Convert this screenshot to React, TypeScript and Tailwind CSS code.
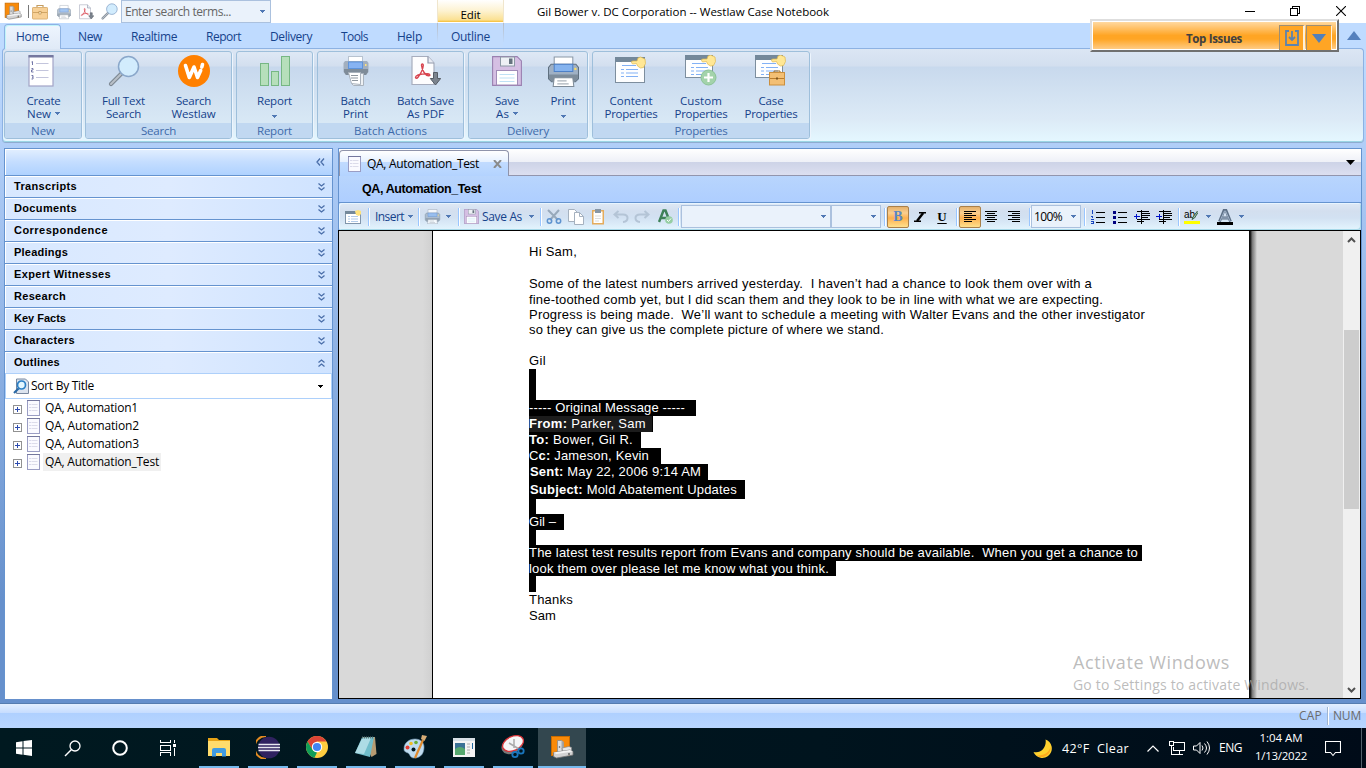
import { useLayoutEffect, useRef, type ReactNode } from "react";

/* Spreads a run of text over a given width with letter spacing. */
function Fit({ w, className = "", children }: { w: number; className?: string; children: ReactNode }) {
  const ref = useRef<HTMLSpanElement>(null);
  useLayoutEffect(() => {
    const el = ref.current;
    if (!el) return;
    el.style.letterSpacing = "0px";
    const n = (el.textContent || "x").length;
    const natural = el.getBoundingClientRect().width;
    el.style.letterSpacing = `${(w - natural) / n}px`;
  }, [w]);
  return (
    <span ref={ref} className={`inline-block shrink-0 whitespace-pre ${className}`}>
      {children}
    </span>
  );
}

function Arrow({ className = "text-[#5078b4]" }: { className?: string }) {
  return (
    <svg width="5" height="3" viewBox="0 0 5 3" className={`shrink-0 ${className}`} shapeRendering="crispEdges">
      <path d="M0 0h5v1H4v1H3v1H2V2H1V1H0z" fill="currentColor" />
    </svg>
  );
}

/* ---------- icons ---------- */
const AppIcon = ({ s = 16 }: { s?: number }) => (
  <svg width={s} height={s} viewBox="0 0 24 24">
    <rect x="1.500" y="1.500" width="18" height="19" fill="#f98a08" stroke="#c96c00" />
    <path d="M7.500 5.500h4l2 1.500v12h-6z" fill="#dcdcdc" stroke="#8a8a8a" strokeWidth=".8" />
    <path d="M11.500 5.500l2 1.500v10h-2z" fill="#a5a5a5" />
    <circle cx="9.500" cy="12" r=".8" fill="#555" />
    <path d="M12 13l7-1.500 2.500 1v3L13 17z" fill="#e6e6e6" stroke="#888" strokeWidth=".7" />
    <path d="M3.500 17.500L20 15l3 1.500v3.500L6.500 23l-3-1.500z" fill="#d3d3d3" stroke="#777" strokeWidth=".8" />
    <path d="M3.500 17.500L20 15l3 1.500L6.500 19z" fill="#f4f4f4" />
    <circle cx="19" cy="19" r=".9" fill="#555" />
  </svg>
);
const Briefcase = ({ w = 17 }: { w?: number }) => (
  <svg width={w} height={w} viewBox="0 0 16 16">
    <path d="M5 4V1.5h6V4" fill="none" stroke="#c39c60" strokeWidth="1.2" />
    <rect x=".5" y="3.5" width="15" height="11.5" rx=".6" fill="#f7d096" stroke="#dcb377" />
    <path d="M1 8.5h14" stroke="#d0a565" />
    <rect x="7" y="7.5" width="2" height="2.5" fill="#fff1d0" stroke="#a87735" strokeWidth=".5" />
  </svg>
);
const Printer = ({ w, h, soft = false }: { w: number; h: number; soft?: boolean }) => (
  <svg width={w} height={h} viewBox="0 0 30 30" opacity={soft ? 0.75 : 1}>
    <path d="M6 1h18v10H6z" fill="#fff" stroke="#8a97a5" strokeWidth="1" />
    <path d="M3 8h24l2.5 3v11l-3 3h-23l-3-3V11z" fill="#9fb0c4" stroke="#5f7080" strokeWidth="1" />
    <path d="M1 18h28v4l-3 3H4l-3-3z" fill="#7d8c9b" />
    <path d="M6 8h18v7H6z" fill="#85b3ee" stroke="#4d80c8" strokeWidth="1" />
    <path d="M6 21h18l1 8.5H5z" fill="#fff" stroke="#7e8b98" strokeWidth="1" />
    <path d="M9 24h9M9 27h11" stroke="#aab2ba" strokeWidth="1.2" />
    <rect x="25.5" y="11.5" width="2" height="2" fill="#ffdf5d" />
  </svg>
);
const BatchPrinter = () => (
  <svg width="26" height="32" viewBox="0 0 26 32">
    <rect x="5.5" y="1.5" width="14" height="8" fill="#fff" stroke="#b7c2cf" />
    <path d="M2 6h22l1.5 2v9L23 20H3L.5 17V8z" fill="#a2afbf" />
    <path d="M1 14h24v3l-2 3H3l-2-3z" fill="#7f8c99" />
    <rect x="5.5" y="7" width="14" height="6.5" fill="#87b3f2" stroke="#5e94dc" />
    <path d="M8.500 18.500h12v12h-10l-2-2z" fill="#eef1f4" stroke="#aab3bd" />
    <path d="M5.500 17.500h12v12l-9-1z" fill="#fff" stroke="#aab3bd" />
    <path d="M8 20.500h7M8 23h7M9 25.500h6" stroke="#8f979f" />
    <rect x="22" y="9" width="1.500" height="2" fill="#ffe27a" />
  </svg>
);
const PdfIcon = ({ w, h }: { w: number; h: number }) => (
  <svg width={w} height={h} viewBox="0 0 30 32">
    <path d="M1 1.500h16l6 6.500v21.500H1z" fill="#fdfdfe" stroke="#a7adbd" strokeWidth="1.200" />
    <path d="M17 1.500V8h6" fill="#e9ecf4" stroke="#8f97aa" strokeWidth="1.200" />
    <path d="M4.500 22.500c0-2.500 7-3.500 11.500-3.700 3-.1 4 2.200 1.500 2-3-.3-6.500-5-7-10.500-.1-1.800 1.900-1.700 1.800 0-.3 4-3 9-5.300 12-1 1.300-2.500 1.200-2.500.2z" fill="none" stroke="#d8444f" strokeWidth="1.400" />
    <path d="M22.500 17.500h4v6h3.200L24.500 30l-5.200-6.500h3.200z" fill="#7c848e" stroke="#565d66" />
  </svg>
);
const Magnifier = ({ w }: { w: number }) => (
  <svg width={w} height={w} viewBox="0 0 32 32">
    <path d="M3 29L13 19" stroke="#7d8792" strokeWidth="4.200" strokeLinecap="round" />
    <path d="M3 29L13 19" stroke="#b9c0c8" strokeWidth="2" strokeLinecap="round" />
    <circle cx="20.500" cy="11.500" r="10" fill="#d2ecfd" stroke="#8aa7ca" strokeWidth="1.500" />
  </svg>
);
const CreateIcon = () => (
  <svg width="26" height="32" viewBox="0 0 26 32" className="-ml-[6px]">
    <rect x="1" y="1" width="24" height="30" fill="#fff" stroke="#a2a4c6" strokeWidth="1.200" />
    <path d="M.500 0h25v2.500H.500z" fill="#75789f" />
    <path d="M8 8.500h12.500M8 15.500h12.500M8 22.500h12.500" stroke="#c3c5dc" />
    <path d="M3.500 7l1-.5V10M3.500 13.500h1.500v1.500h-1.500v2h2M3.500 20.500h1.500v3.500h-1.500M4 22.200h1" fill="none" stroke="#7478a8" />
  </svg>
);
const WestlawIcon = () => (
  <svg width="32" height="32" viewBox="0 0 32 32">
    <circle cx="16" cy="16" r="16" fill="#ff8000" />
    <path d="M7.500 10.500L11.300 22.500L16 12L19.500 22.500L22.700 15.500M24.500 9.500L23.800 12" fill="none" stroke="#fff" strokeWidth="3.600" strokeLinecap="round" strokeLinejoin="round" />
  </svg>
);
const ChartIcon = () => (
  <svg width="30" height="30" viewBox="0 0 30 30">
    <g fill="#b6dfbb" stroke="#76b784">
      <rect x=".500" y="7.500" width="8" height="22" />
      <rect x="11.500" y="15.500" width="7" height="14" />
      <rect x="21.500" y=".500" width="8" height="29" />
    </g>
  </svg>
);
const Floppy = ({ w }: { w: number }) => (
  <svg width={w} height={w} viewBox="0 0 30 30">
    <path d="M.600.600h24.500l4.300 4.300v24.500H.600z" fill="#d5bfe3" stroke="#9a80b0" strokeWidth="1.100" />
    <rect x="8.500" y="1" width="14" height="9" fill="#eef1f5" stroke="#8d99a6" />
    <rect x="17" y="2.500" width="3.500" height="5.500" fill="#66737f" />
    <rect x="4.500" y="14.500" width="21" height="14.500" fill="#fff" stroke="#a18cb8" />
    <path d="M7.500 18.500h15M7.500 22h15M7.500 25.500h15" stroke="#bfe1f5" />
  </svg>
);
const WindowIcon = ({ kind }: { kind: "content" | "custom" | "case" }) => {
  const y = kind === "content" ? 2 : 0;
  const wide = kind === "content" ? 29 : 27;
  const tall = kind === "content" ? 25 : 22;
  return (
    <svg width="32" height="32" viewBox="0 0 32 32">
      <rect x=".500" y={y + 0.5} width={wide} height={tall} fill="#fdfeff" stroke="#7d8e9e" />
      <rect x="0" y={y} width={wide + 1} height="5" fill="#74889a" />
      <path d={`M7 ${y + 8.5}h14M6 ${y + 12.5}h3M11 ${y + 12.5}h12M6 ${y + 16}h3M11 ${y + 16}h12M6 ${y + 19.500}h3M11 ${y + 19.500}h12`} stroke="#82b1f5" />
      <path d={`M16.500 ${y + 5.500}q-.500-1.500 1.500-1.500h4l1-3 2.500-1 4.500 2 .500 4.500-2 4-3 .500-3-2-1-2.500-4 .500z`} fill="#ffe795" stroke="#e0b94e" strokeWidth=".700" />
      {kind === "custom" && (
        <>
          <circle cx="23.500" cy="22.500" r="7.500" fill="#a3d3ab" stroke="#8cc397" />
          <path d="M23.500 18v9M19 22.500h9" stroke="#fff" strokeWidth="2.200" />
        </>
      )}
      {kind === "case" && (
        <>
          <path d="M19 18v-2h6v2" fill="none" stroke="#9b6a25" />
          <rect x="14.500" y="17.500" width="15" height="12.500" fill="#f3bf74" stroke="#cb8f3d" />
          <path d="M15 23.500h14" stroke="#b97c2d" />
          <rect x="21" y="22.500" width="2" height="2" fill="#7d551f" />
        </>
      )}
    </svg>
  );
};
const DocIcon = () => (
  <svg width="13" height="16" viewBox="0 0 13 16">
    <rect x=".500" y=".500" width="12" height="15" fill="#fafaff" stroke="#9a9dc4" />
    <path d="M0 .500h13" stroke="#74779d" />
    <path d="M4.500 4.500h6M4.500 7.500h6M4.500 10.500h6" stroke="#dcdcea" />
    <path d="M2.500 4.500h1M2.500 7.500h1M2.500 10.500h1" stroke="#b6b8d6" />
  </svg>
);
const Chev = ({ up = false }: { up?: boolean }) => (
  <svg width="7" height="8" viewBox="0 0 7 8" className={up ? "rotate-180" : ""}>
    <path d="M.500.500l3 2.500 3-2.500M.500 4.500l3 2.500 3-2.500" fill="none" stroke="#4a6ea9" strokeWidth="1.300" />
  </svg>
);
const Lines = ({ d, extra }: { d: string; extra?: ReactNode }) => (
  <svg width="16" height="14" viewBox="0 0 16 14" shapeRendering="crispEdges">
    <path d={d} stroke="#000" fill="none" />
    {extra}
  </svg>
);

/* ---------- ribbon ---------- */
function RibbonButton({ slot, icon, children }: { slot: string; icon: ReactNode; children: ReactNode }) {
  return (
    <div className={`flex flex-col items-center ${slot}`}>
      <div className="flex h-9 w-8 shrink-0 items-center justify-center">{icon}</div>
      <div className="mt-[5px] flex shrink-0 flex-col items-center text-[11.5px] leading-[13px] text-[#15428b]">{children}</div>
    </div>
  );
}
function Group({ size, name, w, children }: { size: string; name: string; w: number; children: ReactNode }) {
  return (
    <div className={`flex h-[88px] flex-col overflow-hidden rounded-[3px] border border-[#9ebfdb] bg-[linear-gradient(#dee8f5_0px,#d3dfef_14px,#c7d8ed_15px,#d8e8f5_70px)] shadow-[1px_1px_0_#edf5fd] ${size}`}>
      <div className="flex h-[71px] justify-center pt-[1px]">{children}</div>
      <div className="flex h-[15px] items-center justify-center bg-[#c1d8f1] text-[11.5px] leading-[15px] text-[#3e6aaa]">
        <Fit w={w}>{name}</Fit>
      </div>
    </div>
  );
}
const Line2 = ({ children }: { children: ReactNode }) => <div className="flex h-[13px] items-center gap-1">{children}</div>;

const tabs = [
  { t: "New", w: 24, c: "w-[58px]" },
  { t: "Realtime", w: 46, c: "w-[70px]" },
  { t: "Report", w: 35, c: "w-[69px]" },
  { t: "Delivery", w: 42, c: "w-[66px]" },
  { t: "Tools", w: 27, c: "w-[61px]" },
  { t: "Help", w: 25, c: "w-[49px]" },
];

function TitleBar() {
  return (
    <header className="flex h-[23px] shrink-0 items-center bg-white">
      <div className="flex w-[28px] justify-center pr-[3px] pb-[2px]"><AppIcon s={18} /></div>
      <div className="h-[13px] w-px bg-[#777]" />
      <div className="ml-[3px] flex w-[17px]"><Briefcase w={16} /></div>
      <div className="ml-[8px] flex w-[15px]"><Printer w={14} h={16} soft /></div>
      <div className="ml-[7px] flex w-[15px]"><PdfIcon w={15} h={16} /></div>
      <div className="ml-[7px] flex w-[17px]"><Magnifier w={17} /></div>
      <div className="ml-[3px] flex h-[23px] w-[150px] items-center justify-between border border-[#abc1de] bg-[#eaf2fb] pr-[5px] pl-[3px] text-[12px] text-[#666]">
        <Fit w={106}>Enter search terms...</Fit>
        <Arrow />
      </div>
      <div className="ml-[166px] flex h-[23px] w-[67px] items-end justify-center border-x border-[#f0e6cd] border-b border-b-white bg-[linear-gradient(#ffffff,#fdf2d0_50%,#fbe193_90%,#f5bd36)] text-[11.5px] leading-[14px] text-black">
        <Fit w={20}>Edit</Fit>
      </div>
      <div className="ml-[33px] flex-1 text-[11.5px] text-black"><Fit w={292}>Gil Bower v. DC Corporation -- Westlaw Case Notebook</Fit></div>
      <svg width="10" height="10" className="mr-[35px]" shapeRendering="crispEdges"><path d="M0 4.500h10" stroke="#000" /></svg>
      <svg width="10" height="10" className="mt-[-2px] mr-[36px]" viewBox="0 0 10 10" shapeRendering="crispEdges"><path d="M.500 2.500h7v7h-7zM2.500 2.500v-2h7v7h-2" fill="none" stroke="#000" /></svg>
      <svg width="10" height="10" className="mt-[-2px] mr-[20px]" viewBox="0 0 10 10"><path d="M0 0l10 10M10 0L0 10" stroke="#000" strokeWidth="1.100" /></svg>
    </header>
  );
}

function Ribbon() {
  return (
    <>
      <nav className="flex h-[25px] shrink-0 items-center bg-[#bfdbff] pl-1 text-[12px] text-[#15428b]">
        <div className="z-10 mt-[2px] flex h-[25px] w-[57px] items-center justify-center rounded-t-[4px] border border-b-0 border-[#8db2e3] bg-[linear-gradient(#eef5fe,#e0eaf7)] shadow-[inset_1px_1px_0_#bff4fa]"><Fit w={33}>Home</Fit></div>
        {tabs.map((t) => (
          <div key={t.t} className={`flex justify-center pt-[2px] ${t.c}`}><Fit w={t.w}>{t.t}</Fit></div>
        ))}
        <div className="ml-[3px] flex h-[25px] w-[67px] bg-[linear-gradient(#b6bcc4,#bfdbff_80%)] px-px">
          <div className="flex flex-1 items-center justify-center bg-[#c1dbfd] pt-[2px]"><Fit w={39}>Outline</Fit></div>
        </div>
        <div className="flex flex-1 justify-end pr-[5px]"><svg width="14" height="9"><path d="M0 9L7 0l7 9z" fill="#5580bd" /></svg></div>
      </nav>
      <section className="mx-[2px] flex h-[94px] shrink-0 gap-1 rounded-[4px] border border-[#8db2e3] border-b-[#9ad5e4] bg-[linear-gradient(#dbe6f4_0px,#d3dfef_17px,#c8d9ed_18px,#dceaf6_70px,#e4f7ff)] px-px pt-[2px] shadow-[0_1px_0_#8eabcf]">
        <Group size="w-[78px]" name="New" w={24}>
          <RibbonButton slot="w-[77px] pl-px" icon={<CreateIcon />}>
            <Line2><Fit w={34}>Create</Fit></Line2>
            <Line2><Fit w={24}>New</Fit><Arrow /></Line2>
          </RibbonButton>
        </Group>
        <Group size="w-[147px] -ml-px" name="Search" w={35}>
          <RibbonButton slot="w-[70px]" icon={<Magnifier w={32} />}>
            <Line2><Fit w={43}>Full Text</Fit></Line2><Line2><Fit w={35}>Search</Fit></Line2>
          </RibbonButton>
          <RibbonButton slot="w-[70px]" icon={<WestlawIcon />}>
            <Line2><Fit w={35}>Search</Fit></Line2><Line2><Fit w={44}>Westlaw</Fit></Line2>
          </RibbonButton>
        </Group>
        <Group size="w-[77px]" name="Report" w={35}>
          <RibbonButton slot="w-[75px]" icon={<ChartIcon />}>
            <Line2><Fit w={35}>Report</Fit></Line2><div className="flex h-[18px] items-center"><Arrow /></div>
          </RibbonButton>
        </Group>
        <Group size="w-[147px]" name="Batch Actions" w={73}>
          <RibbonButton slot="w-[70px]" icon={<BatchPrinter />}>
            <Line2><Fit w={30}>Batch</Fit></Line2><Line2><Fit w={25}>Print</Fit></Line2>
          </RibbonButton>
          <RibbonButton slot="w-[70px]" icon={<PdfIcon w={30} h={32} />}>
            <Line2><Fit w={57}>Batch Save</Fit></Line2><Line2><Fit w={37}>As PDF</Fit></Line2>
          </RibbonButton>
        </Group>
        <Group size="w-[120px]" name="Delivery" w={42}>
          <RibbonButton slot="w-[70px]" icon={<Floppy w={30} />}>
            <Line2><Fit w={24}>Save</Fit></Line2><Line2><Fit w={13}>As</Fit><Arrow /></Line2>
          </RibbonButton>
          <RibbonButton slot="w-[42px]" icon={<Printer w={31} h={31} />}>
            <Line2><Fit w={25}>Print</Fit></Line2><div className="flex h-[18px] items-center"><Arrow /></div>
          </RibbonButton>
        </Group>
        <Group size="w-[218px]" name="Properties" w={53}>
          <RibbonButton slot="w-[70px]" icon={<WindowIcon kind="content" />}>
            <Line2><Fit w={43}>Content</Fit></Line2><Line2><Fit w={53}>Properties</Fit></Line2>
          </RibbonButton>
          <RibbonButton slot="w-[70px]" icon={<WindowIcon kind="custom" />}>
            <Line2><Fit w={42}>Custom</Fit></Line2><Line2><Fit w={53}>Properties</Fit></Line2>
          </RibbonButton>
          <RibbonButton slot="w-[70px]" icon={<WindowIcon kind="case" />}>
            <Line2><Fit w={25}>Case</Fit></Line2><Line2><Fit w={53}>Properties</Fit></Line2>
          </RibbonButton>
        </Group>
      </section>
    </>
  );
}

/* ---------- sidebar ---------- */
const sections: [string, number][] = [
  ["Transcripts", 63], ["Documents", 63], ["Correspondence", 94], ["Pleadings", 54], ["Expert Witnesses", 97],
  ["Research", 52], ["Key Facts", 52], ["Characters", 61], ["Outlines", 46],
];
const tree: [string, number][] = [
  ["QA, Automation1", 93], ["QA, Automation2", 94], ["QA, Automation3", 94], ["QA, Automation_Test", 114],
];

function Sidebar() {
  return (
    <aside className="flex w-[329px] shrink-0 flex-col border border-[#6593cf] border-b-0 bg-white">
      <div className="flex h-[27px] items-center justify-end border-b border-[#6593cf] bg-[linear-gradient(#e3efff,#c4ddff_50%,#afd2ff)] pr-[7px] shadow-[inset_1px_1px_0_#fff]">
        <svg width="9" height="8" viewBox="0 0 9 8"><path d="M4 .500L1 4l3 3.500M8 .500L5 4l3 3.500" fill="none" stroke="#4a6ea9" strokeWidth="1.300" /></svg>
      </div>
      {sections.map(([s, w], i) => (
        <div key={s} className={`flex h-[22px] items-center justify-between border-b bg-[linear-gradient(90deg,#d8e8ff,#deebff_50%,#cfe3ff)] pr-[7px] pl-[9px] font-['Liberation_Sans'] text-[11px] font-bold text-black shadow-[inset_1px_1px_0_#fff] ${i === 8 ? "border-[#aed0fa]" : "border-[#6593cf]"}`}>
          <Fit w={w}>{s}</Fit>
          <Chev up={i === 8} />
        </div>
      ))}
      <div className="flex h-[25px] items-center border-x border-b border-[#add0fb] pr-[8px] pl-[7px] text-[12px] text-black">
        <svg width="16" height="16" viewBox="0 0 16 16">
          <path d="M3.500 1h9l3 3v11.500h-12z" fill="#dce4ef" stroke="#7888a0" />
          <circle cx="8.500" cy="7" r="4" fill="#e3f7ff" stroke="#2b7fc5" strokeWidth="1.700" />
          <path d="M5.500 10.500L1 15" stroke="#2868a6" strokeWidth="2.200" />
        </svg>
        <Fit w={63} className="ml-[2px]">Sort By Title</Fit>
        <div className="flex flex-1 justify-end"><Arrow className="text-black" /></div>
      </div>
      {tree.map(([s, w], i) => (
        <div key={s} className="flex h-[18px] items-center pl-[8px] text-[12px] text-black">
          <svg width="9" height="9" viewBox="0 0 9 9" className="mt-[3px]" shapeRendering="crispEdges"><rect x=".500" y=".500" width="8" height="8" fill="#fff" stroke="#919191" /><path d="M2 4.500h5M4.500 2v5" stroke="#2d4bb0" /></svg>
          <div className="ml-[5px] w-[16px]"><DocIcon /></div>
          <div className={`flex h-[18px] items-center pr-[2px] pl-[2px] ${i === 3 ? "bg-[#f0f0f0]" : ""}`}><Fit w={w}>{s}</Fit></div>
        </div>
      ))}
    </aside>
  );
}

/* ---------- toolbar ---------- */
const Slot = ({ c, children }: { c: string; children?: ReactNode }) => <div className={`flex shrink-0 items-center justify-center ${c}`}>{children}</div>;
const Sep = ({ c = "w-[6px]" }: { c?: string }) => (
  <div className={`flex shrink-0 justify-center ${c}`}><div className="h-[18px] w-px bg-[#9ac6ff] shadow-[1px_0_0_#fff]" /></div>
);
const pressed = "border border-[#a9804a] bg-[linear-gradient(#e5b16b,#fbcf8f_30%,#fdb04f_55%,#ffe08c)]";

function Toolbar() {
  return (
    <div className="flex h-[27px] shrink-0 items-center rounded-[3px] bg-[linear-gradient(#dfe9f5,#d3dfef_30%,#d2e1f2_55%,#e4f5fe)] text-[12px] text-[#15428b] shadow-[inset_1px_1px_0_#e8f5ff,inset_-1px_-1px_0_#a6d8e8]">
      <Slot c="w-[27px]">
        <svg width="16" height="14" viewBox="0 0 16 14"><rect x=".500" y="1.500" width="15" height="12" fill="#fff" stroke="#8095aa" /><path d="M0 2.500h16" stroke="#74889a" strokeWidth="3" /><path d="M3 6.500h2M6 6.500h7M3 9h2M6 9h7M3 11.500h2M6 11.500h7" stroke="#b2cbe9" /><path d="M10 1l3-1 3 1v3l-2 2-3-1z" fill="#ffe37d" /></svg>
      </Slot>
      <Sep c="w-[4px]" />
      <Slot c="w-[35px] pl-[4px]"><Fit w={29}>Insert</Fit></Slot><Slot c="w-[10px]"><Arrow /></Slot>
      <Sep />
      <Slot c="w-[22px]"><Printer w={17} h={15} soft /></Slot><Slot c="w-[10px]"><Arrow /></Slot>
      <Sep c="w-[10px]" />
      <Slot c="w-[16px]"><Floppy w={15} /></Slot><Slot c="w-[46px]"><Fit w={40}>Save As</Fit></Slot><Slot c="w-[12px]"><Arrow /></Slot>
      <Sep />
      <Slot c="w-[21px]">
        <svg width="16" height="15" viewBox="0 0 16 15"><path d="M2 1l10 10M13 1L4 11" stroke="#98a9bb" strokeWidth="2" /><circle cx="3.500" cy="12" r="2.200" fill="none" stroke="#5f94d0" strokeWidth="1.500" /><circle cx="12.500" cy="12" r="2.200" fill="none" stroke="#5f94d0" strokeWidth="1.500" /></svg>
      </Slot>
      <Slot c="w-[24px]">
        <svg width="16" height="16" viewBox="0 0 16 16"><path d="M.500.500h6l3 3v9h-9z" fill="#fff" stroke="#a5b1bf" /><path d="M6.500 3.500h5l4 4v8h-9z" fill="#fff" stroke="#a5b1bf" /><path d="M11.500 3.500v4h4" fill="none" stroke="#a5b1bf" /></svg>
      </Slot>
      <Slot c="w-[20px]">
        <svg width="12" height="16" viewBox="0 0 12 16"><rect x=".750" y="1.750" width="10.500" height="13" fill="#fff" stroke="#e5ac5d" strokeWidth="1.500" /><rect x="3" y="0" width="6" height="4" fill="#8897a5" /><path d="M3 7h6M3 9.500h6M3 12h4" stroke="#ddd" /></svg>
      </Slot>
      <Slot c="w-[25px]"><svg width="16" height="13" viewBox="0 0 16 13"><path d="M5.500 1L1.500 4.500l4 3.500M2 4.500h8q4.500 0 4.500 3.500t-4.500 4" fill="none" stroke="#b4c4d6" strokeWidth="2" /></svg></Slot>
      <Slot c="w-[18px]"><svg width="16" height="13" viewBox="0 0 16 13"><path d="M10.500 1l4 3.500-4 3.500M14 4.500H6Q1.500 4.500 1.500 8t4.500 4" fill="none" stroke="#b4c4d6" strokeWidth="2" /></svg></Slot>
      <Slot c="ml-[4px] w-[20px]">
        <svg width="15" height="15" viewBox="0 0 15 15"><path d="M1 13L5.500 1.500h2L12 13M3.500 9h6" fill="none" stroke="#3d8158" strokeWidth="2.500" /><circle cx="11" cy="11" r="3.800" fill="#95cea3" /><path d="M9 11l1.500 1.500L13 9.500" fill="none" stroke="#fff" /></svg>
      </Slot>
      <Sep />
      <div className="flex h-[23px] w-[150px] shrink-0 items-center justify-end border border-[#abc1de] bg-[#eaf2fb] pr-[4px]"><Arrow /></div>
      <div className="flex h-[23px] w-[50px] shrink-0 items-center justify-end border border-[#abc1de] bg-[#eaf2fb] pr-[4px]"><Arrow /></div>
      <Sep />
      <Slot c={`h-[22px] w-[22px] rounded-[2px] ${pressed}`}><span className="font-['Liberation_Serif'] text-[14px] font-bold text-[#5b86c5]">B</span></Slot>
      <Slot c="w-[21px]"><svg width="12" height="10" viewBox="0 0 12 10"><path d="M5 .700h7M0 9.300h7" stroke="#000" strokeWidth="1.400" /><path d="M9.200 1L3 9" stroke="#000" strokeWidth="2.400" /></svg></Slot>
      <Slot c="w-[24px]"><span className="font-['Liberation_Serif'] text-[13px] font-bold text-black underline underline-offset-2">U</span></Slot>
      <Sep c="w-[5px]" />
      <Slot c={`h-[22px] w-[22px] rounded-[2px] ${pressed}`}><Lines d="M2 1.500h12M2 3.500h8M2 5.500h12M2 7.500h8M2 9.500h12M2 11.500h8" /></Slot>
      <Slot c="w-[20px]"><Lines d="M2 1.500h12M4 3.500h8M2 5.500h12M4 7.500h8M2 9.500h12M4 11.500h8" /></Slot>
      <Slot c="w-[26px]"><Lines d="M2 1.500h12M6 3.500h8M2 5.500h12M6 7.500h8M2 9.500h12M6 11.500h8" /></Slot>
      <Sep c="w-[4px]" />
      <div className="flex h-[23px] w-[50px] shrink-0 items-center justify-between border border-[#abc1de] bg-[#eaf2fb] pr-[4px] pl-[2px] text-black"><Fit w={28}>100%</Fit><Arrow /></div>
      <Sep />
      <Slot c="w-[22px]"><Lines d="M6 2.500h9M6 7.500h9M6 12.500h9" extra={<path d="M2.500 0v4M1 6h2M2.500 6v2M1 9h3M1 11h3M3.500 11v3M1 13.500h2" stroke="#1746c0" />} /></Slot>
      <Slot c="w-[22px]"><Lines d="M6 2.500h9M6 7.500h9M6 12.500h9" extra={<path d="M1 1h3v3H1zM1 6h3v3H1zM1 11h3v3H1z" fill="#000080" />} /></Slot>
      <Slot c="w-[22px]"><Lines d="M3 1.500h12M8 3.500h8M8 5.500h8M8 7.500h6M3 9.500h13M3 11.500h7M7.500 0v14" extra={<path d="M0 6.500h6M2.500 4v5" stroke="#0010c8" />} /></Slot>
      <Slot c="w-[22px]"><Lines d="M3 1.500h12M8 3.500h8M8 5.500h8M8 7.500h6M3 9.500h13M3 11.500h7M7.500 0v14" extra={<path d="M0 6.500h6M3.500 4v5" stroke="#0010c8" />} /></Slot>
      <Sep />
      <Slot c="w-[22px]">
        <div className="flex h-[15px] w-[16px] flex-col border-b-[3px] border-[#ff0]">
          <div className="flex items-start"><span className="font-['Liberation_Sans'] text-[10px] leading-[11px] text-black">ab</span><svg width="7" height="11" viewBox="0 0 7 11" className="-ml-1"><path d="M6.500 2L2 8l-1 2.500L3.500 9l3.500-5.500" fill="#a8cbb0" stroke="#385e4b" /></svg></div>
        </div>
      </Slot>
      <Slot c="w-[10px]"><Arrow /></Slot>
      <Slot c="w-[24px]">
        <svg width="16" height="16" viewBox="0 0 16 16"><path d="M2.500 12.500L7 1.500h2l4.500 11M4.500 9h7" fill="none" stroke="#5e7086" strokeWidth="2.800" /><path d="M3 12L7.500 2h1L13 12M5 9h6" fill="none" stroke="#a3b5cb" /><path d="M0 14.500h16" stroke="#000" strokeWidth="3" /></svg>
      </Slot>
      <Slot c="w-[9px]"><Arrow /></Slot>
    </div>
  );
}

/* ---------- document ---------- */
const Row = ({ h = "h-4", w, children }: { h?: string; w: number; children: ReactNode }) => (
  <div className={`flex items-center ${h}`}><Fit w={w}>{children}</Fit></div>
);
const Sel = ({ box, w, children }: { box: string; w?: number; children?: ReactNode }) => (
  <div className={`flex items-center bg-black text-white ${box}`}>{w ? <Fit w={w}>{children}</Fit> : null}</div>
);

function Document() {
  return (
    <div className="w-[816px] shrink-0 bg-white pt-[13px] pl-[96px] font-['Liberation_Sans'] text-[13px] leading-[16px] text-black">
      <Row w={48}>Hi Sam,</Row>
      <div className="h-4" />
      <Row w={563}>Some of the latest numbers arrived yesterday.  I haven’t had a chance to look them over with a</Row>
      <Row h="h-[15px]" w={574}>fine-toothed comb yet, but I did scan them and they look to be in line with what we are expecting.</Row>
      <Row h="h-[15px]" w={616}>Progress is being made.  We’ll want to schedule a meeting with Walter Evans and the other investigator</Row>
      <Row w={355}>so they can give us the complete picture of where we stand.</Row>
      <div className="h-[15px]" />
      <Row w={17}>Gil</Row>
      <Sel box="h-[31px] w-[7px]" />
      <Sel box="h-4 w-[167px]" w={156}>----- Original Message -----</Sel>
      <Sel box="h-4 w-[124px] border-r border-black !bg-[#1c1c1c]" w={117}><b>From:</b> Parker, Sam</Sel>
      <Sel box="h-4 w-[112px]" w={104}><b>To:</b> Bower, Gil R.</Sel>
      <Sel box="h-4 w-[132px]" w={120}>C<b>c:</b> Jameson, Kevin</Sel>
      <Sel box="h-4 w-[179px] pl-px" w={171}><b>Sent:</b> May 22, 2006 9:14 AM</Sel>
      <Sel box="h-[19px] w-[216px] pl-px" w={207}><b>Subject:</b> Mold Abatement Updates</Sel>
      <Sel box="h-[15px] w-[7px]" />
      <Sel box="h-4 w-[35px]" w={27}>Gil –</Sel>
      <Sel box="h-[15px] w-[7px]" />
      <Sel box="h-4 w-[613px]" w={609}>The latest test results report from Evans and company should be available.  When you get a chance to</Sel>
      <Sel box="h-[15px] w-[307px]" w={300}>look them over please let me know what you think.</Sel>
      <Sel box="h-4 w-[7px]" />
      <Row w={44}>Thanks</Row>
      <Row w={27}>Sam</Row>
    </div>
  );
}

function Main() {
  return (
    <main className="flex w-[1024px] flex-col border border-b-0 border-[#6593cf]">
      <div className="flex h-[27px] shrink-0 items-end border-b border-[#9295ad] bg-[linear-gradient(#ffffff,#eef0f7_50%,#cdd3e7_51%,#dcdff0)]">
        <div className="-mb-px flex h-[26px] w-[170px] items-center rounded-t-[4px] border border-b-0 border-[#8f94ab] bg-[linear-gradient(#ffffff,#e5f0ff_45%,#c1dbff_46%,#b3d3ff)] pl-[8px] text-[12px] text-black">
          <DocIcon />
          <Fit w={112} className="ml-[6px]">QA, Automation_Test</Fit>
          <svg width="9" height="8" viewBox="0 0 9 8" className="ml-[14px]"><path d="M1 0l7 8M8 0L1 8" stroke="#8a8a8a" strokeWidth="1.900" /></svg>
        </div>
        <div className="flex h-[26px] flex-1 items-center justify-end pr-[6px]"><svg width="9" height="5"><path d="M0 0h9L4.500 5z" fill="#000" /></svg></div>
      </div>
      <div className="flex h-[27px] shrink-0 items-center border-b border-[#6593cf] bg-[linear-gradient(#b8d5fd,#aeceff)] pl-[23px] font-['Liberation_Sans'] text-[12.5px] font-bold text-black"><Fit w={119}>QA, Automation_Test</Fit></div>
      <Toolbar />
      <div className="-ml-px flex min-h-0 flex-1 overflow-hidden border border-black bg-[#d9d9d9]">
        <div className="w-[93px] shrink-0 bg-[linear-gradient(90deg,#d9d9d9_90%,#d0d0d0)]" />
        <div className="w-px shrink-0 bg-black" />
        <Document />
        <div className="w-[8px] shrink-0 bg-[linear-gradient(90deg,#000,#222_20%,#777_40%,#b5b5b5_80%,#d9d9d9)]" />
        <div className="flex-1" />
        <div className="flex w-[17px] shrink-0 flex-col items-center bg-[#f0f0f0]">
          <svg width="9" height="6" viewBox="0 0 9 6" className="mt-[6px]"><path d="M1 5l3.500-3.500L8 5" fill="none" stroke="#505050" strokeWidth="2" /></svg>
          <div className="mt-[87px] h-[179px] w-[15px] bg-[#cdcdcd]" />
          <div className="flex-1" />
          <svg width="9" height="6" viewBox="0 0 9 6" className="mb-[5px]"><path d="M1 1l3.500 3.500L8 1" fill="none" stroke="#505050" strokeWidth="2" /></svg>
        </div>
      </div>
    </main>
  );
}

/* ---------- taskbar ---------- */
const Task = ({ gap = "ml-[9px]", children }: { gap?: string; children: ReactNode }) => (
  <div className={`flex h-10 w-10 shrink-0 items-center justify-center border-b-2 border-[#76b9ed] ${gap}`}>{children}</div>
);

function Taskbar() {
  return (
    <footer className="flex h-10 shrink-0 items-center bg-[linear-gradient(90deg,#001920,#00141e_60%,#000b18)] text-[12px] text-white">
      <Slot c="w-12"><svg width="16" height="16" viewBox="0 0 16 16"><path d="M0 2.200L6.500 1.300v6.200H0zM7.500 1.100L16 0v7.500H7.500zM0 8.500h6.500v6.200L0 13.800zM7.500 8.500H16V16l-8.500-1.200z" fill="#fff" /></svg></Slot>
      <Slot c="w-12"><svg width="17" height="17" viewBox="0 0 17 17"><circle cx="11" cy="6" r="5" fill="none" stroke="#fff" strokeWidth="1.300" /><path d="M7.500 9.500L1 16" stroke="#fff" strokeWidth="1.400" /></svg></Slot>
      <Slot c="w-12"><svg width="16" height="16" viewBox="0 0 16 16"><circle cx="8" cy="8" r="6.800" fill="none" stroke="#fff" strokeWidth="2" /></svg></Slot>
      <Slot c="w-12"><svg width="16" height="16" viewBox="0 0 16 16" shapeRendering="crispEdges"><path d="M.500 0v2.500h10V0M.500 16v-3.500h10V16M.500 5.500h10v5H.500zM14.500 0v3M14.500 8v8" fill="none" stroke="#fff" /><path d="M13 4h3v3h-3z" fill="#fff" /></svg></Slot>
      <Task gap="ml-[7px]"><svg width="22" height="19" viewBox="0 0 22 19"><path d="M0 0h9l2 2h11v16H0z" fill="#e7a316" /><path d="M0 3h22v15H0z" fill="#ffdc6c" /><path d="M4 18.500v-6.500q0-2 2-2h10q2 0 2 2v6.500h-4v-3.500H8v3.500z" fill="#3f9be2" /></svg></Task>
      <Task><svg width="24" height="23" viewBox="0 0 24 23"><path d="M10 0A11.500 11.500 0 0 0 10 23" fill="none" stroke="#e48b22" strokeWidth="2" /><circle cx="13" cy="11.500" r="10.800" fill="#2f2260" /><path d="M2.500 8.500h21.500M2 11.500h22M2.500 14.500h21.500" stroke="#e8e8f0" strokeWidth="1.600" /></svg></Task>
      <Task><svg width="22" height="22" viewBox="0 0 22 22"><circle cx="11" cy="11" r="11" fill="#ffcd40" /><path d="M1.500 5.500A11 11 0 0 1 20.500 5.500H11L6.300 13.500z" fill="#db4437" /><path d="M1.500 5.500L7 14.500l4 2L8.500 21.700A11 11 0 0 1 1.500 5.500z" fill="#0f9d58" /><circle cx="11" cy="11" r="5.200" fill="#fff" /><circle cx="11" cy="11" r="4.100" fill="#4285f4" /></svg></Task>
      <Task><svg width="22" height="22" viewBox="0 0 22 22"><path d="M7 1h13l1.500 17-5 3z" fill="#b59b72" /><path d="M7 1.500L19 1l-4 20L0 17z" fill="#70bdca" /><path d="M7 2.500L16 2 9 18 0 17z" fill="#c7eaf1" opacity=".7" /><path d="M7 1.500h12" stroke="#5a7476" strokeWidth="2" strokeDasharray="1 1" /></svg></Task>
      <Task><svg width="24" height="24" viewBox="0 0 24 24"><path d="M1 14C1 7 7 4 12 4s9 3 9 8-2 11-10 11c-4 0-4-4-6-5s-4-1-4-4z" fill="#bfdcef" stroke="#7b9fba" strokeWidth=".600" /><circle cx="4.500" cy="12.500" r="2" fill="#e33c31" /><circle cx="8" cy="8.500" r="1.800" fill="#f0bd24" /><circle cx="13" cy="7.500" r="1.800" fill="#69ae36" /><circle cx="10.500" cy="14.500" r="2" fill="#001820" /><path d="M20 5L12 23" stroke="#e08b2e" strokeWidth="2.200" /><path d="M18 4L19 0l5 1-2.500 5z" fill="#d6ac76" /></svg></Task>
      <Task><svg width="22" height="19" viewBox="0 0 22 19"><path d="M0 0h22v19H0z" fill="#f3f3f3" /><path d="M0 0h22v3H0z" fill="#d7e0e6" /><path d="M2 5h10v12H2z" fill="#3a7195" /><path d="M2 11q5-4 10 0v6H2z" fill="#55a76e" /><path d="M14 6h3M14 9h3M14 12h3M14 15h3" stroke="#aaa" /><path d="M19.500 5v6" stroke="#1f68a0" /></svg></Task>
      <Task><svg width="24" height="24" viewBox="0 0 24 24"><ellipse cx="11" cy="10.500" rx="11" ry="8" fill="#777" transform="rotate(-25 11 10.500)" /><ellipse cx="12" cy="8.500" rx="11" ry="7" fill="#f5f6f7" stroke="#d8353a" strokeWidth="1.300" transform="rotate(-25 12 8.500)" /><path d="M13 4v9M8 8l10 6" stroke="#aaa" strokeWidth="1.500" /><circle cx="14" cy="19.500" r="2.700" fill="none" stroke="#1976bd" strokeWidth="1.800" /><circle cx="20" cy="16" r="2.700" fill="none" stroke="#1976bd" strokeWidth="1.800" /></svg></Task>
      <div className="ml-[5px] flex h-10 w-12 shrink-0 items-center justify-center border-b-2 border-[#76b9ed] bg-[#33474f]"><AppIcon s={24} /></div>
      <div className="flex-1" />
      <svg width="19" height="19" viewBox="0 0 19 19"><path d="M12.500.500a9.500 9.500 0 1 1-12 12.500C8 15 14 8 12.500.500z" fill="#ffd12e" /><path d="M17.500 8a9 9 0 0 1-14 8.500C12 17 16 13 17.500 8z" fill="#ffa91d" /></svg>
      <Fit w={67} className="mt-[2px] ml-[10px] text-[12.5px]">42°F  Clear</Fit>
      <svg width="12" height="7" viewBox="0 0 12 7" className="ml-[18px]"><path d="M.500 6.500L6 1l5.500 5.500" fill="none" stroke="#fff" strokeWidth="1.200" /></svg>
      <svg width="16" height="14" viewBox="0 0 16 14" className="ml-[10px]" shapeRendering="crispEdges"><path d="M5 1.500h10.500v8H4.500v-4M10 10v3M6 13.500h8M.500.500h4v4h-4zM2.500 5v8.500H6" fill="none" stroke="#fff" /></svg>
      <svg width="17" height="14" viewBox="0 0 17 14" className="ml-[8px]"><path d="M.500 5h3L7 1.500v11L3.500 9h-3zM9 4.500q2 2.500 0 5M11.500 2.500q4 4.500 0 9M14 .500q5 6.500 0 13" fill="none" stroke="#fff" /></svg>
      <Fit w={23} className="ml-[9px] text-[12px]">ENG</Fit>
      <div className="ml-[12px] flex w-[54px] flex-col items-center gap-px pb-[3px] text-[11.5px] leading-[17px]"><Fit w={43}>1:04 AM</Fit><Fit w={52}>1/13/2022</Fit></div>
      <svg width="16" height="17" viewBox="0 0 16 17" className="ml-[17px]"><path d="M.500 1.500h15v11h-5l-2.500 3-2.500-3h-5z" fill="none" stroke="#fff" strokeWidth="1.100" /></svg>
      <div className="mr-[4px] ml-[20px] h-10 w-px bg-[#52616c]" />
    </footer>
  );
}

export default function App() {
  return (
    <div className="relative flex h-[768px] w-[1366px] flex-col overflow-hidden bg-[linear-gradient(#bfdbff_0px,#bfdbff_48px,#b0cef8_145px,#6690cc_600px)] font-['Open_Sans',sans-serif]">
      <TitleBar />
      <Ribbon />
      <div className="mt-[6px] flex h-[551px] shrink-0 gap-[5px] pl-1">
        <Sidebar />
        <Main />
      </div>
      <div className="h-[4px] shrink-0 bg-[#6690cc]" />
      <div className="flex h-[25px] shrink-0 items-center justify-end border-t border-[#567db0] bg-[linear-gradient(#e3efff,#c7ddff_36%,#afd0ff_38%,#b9d6ff)] pr-[5px] text-[12px] text-[#6b6b6b]">
        <Fit w={23}>CAP</Fit>
        <div className="mx-[5px] h-[18px] w-px bg-[#a0b5d0] shadow-[1px_0_0_#fff]" />
        <Fit w={28}>NUM</Fit>
      </div>
      <Taskbar />

      <div className="absolute top-[19px] left-[1090px] z-20 flex h-[33px] w-[249px] items-center border-2 border-t-[#dedede] border-r-[#707070] border-b-[#707070] border-l-[#dedede] bg-[linear-gradient(#ffdca8,#ffa524_50%,#ffa524_62%,#ffcf8e)] pr-[5px] shadow-[inset_1px_1px_0_#fff,inset_-1px_-1px_0_#fff]">
        <div className="flex flex-1 justify-end pt-[7px] pr-[37px] text-[11.5px] font-bold text-[#404040]"><Fit w={56}>Top Issues</Fit></div>
        <div className="mt-[4px] flex h-[25px] w-[26px] items-center justify-center border-t border-l border-r-2 border-t-[#9c8e75] border-r-[#fff0d8] border-l-[#9c8e75] bg-[#ffa524]">
          <svg width="14" height="16" viewBox="0 0 14 16"><path d="M4 1H1v14h12V1h-3" fill="none" stroke="#5b83b0" strokeWidth="1.800" /><path d="M7 1v9M4 7l3 3 3-3" fill="none" stroke="#5b83b0" strokeWidth="1.800" /></svg>
        </div>
        <div className="mt-[4px] ml-px flex h-[25px] w-[26px] items-center justify-center border-t border-r border-l border-t-[#9c8e75] border-r-[#fff0d8] border-l-[#9c8e75] bg-[#ffa524]">
          <svg width="14" height="9"><path d="M0 0h14L7 9z" fill="#5280ba" /></svg>
        </div>
      </div>

      <div className="absolute top-[650px] left-[1073px] z-20 flex flex-col items-start text-[#a6a6a6]/75">
        <Fit w={157} className="text-[18px] leading-[24px]">Activate Windows</Fit>
        <Fit w={236} className="text-[14px] leading-[22px]">Go to Settings to activate Windows.</Fit>
      </div>
    </div>
  );
}
